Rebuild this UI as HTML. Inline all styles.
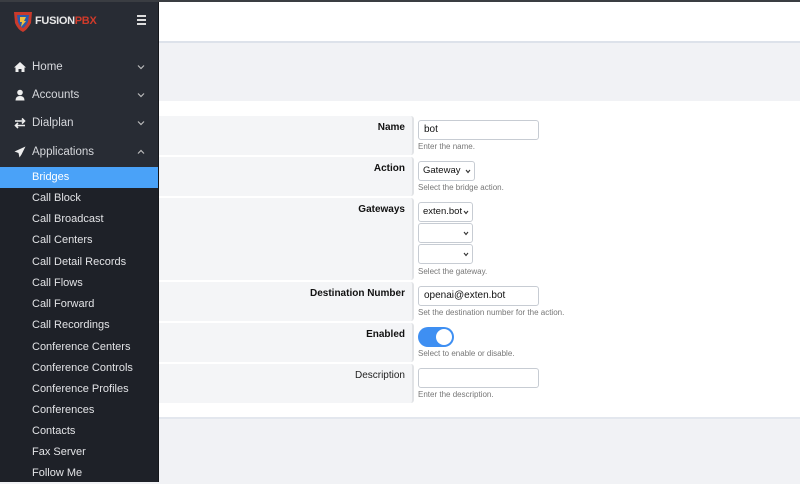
<!DOCTYPE html>
<html><head><style>
*{margin:0;padding:0;box-sizing:border-box}
body{width:800px;height:482px;overflow:hidden;background:#f1f2f5;font-family:"Liberation Sans",sans-serif;position:relative}
#topline{position:absolute;left:0;top:0;width:800px;height:2px;background:#3a3d42}
#side{position:absolute;left:0;top:0;width:159px;height:482px;background:#282c34;border-right:1px solid #15171b}
#sub{position:absolute;left:0;top:167px;width:158px;height:315px;background:#1e2128}
.mi{position:absolute;left:0;width:158px;height:28px;color:#d6d8dc;font-size:11.5px;line-height:28px}
.mi .t{position:absolute;left:32px}
.mi .ic{position:absolute;left:14px;top:8px;width:12px;height:12px}
.mi .ch{position:absolute;left:137px;top:11px;width:8px;height:6px}
.si{position:absolute;left:0;width:158px;height:21px;color:#e2e3e6;font-size:11px;line-height:21px;padding-left:32px}
.si.act{background:#4aa2f8;color:#fff}
#top{position:absolute;left:159px;top:2px;width:641px;height:41px;background:#fff;border-bottom:2px solid #dde2ea}
#card{position:absolute;left:159px;top:101px;width:641px;height:318px;background:#fff;border-bottom:2px solid #e3e7ee}
.row{position:absolute;left:0;width:641px}
.lab{position:absolute;left:0;top:0;width:255px;height:100%;background:#f4f5f7;border-right:2px solid #e1e3e6;border-radius:0 3px 3px 0;text-align:right;padding-right:7px;padding-top:6px;font-size:10px;font-weight:bold;color:#111}
.lab.n{font-weight:normal;color:#222}
.inp{position:absolute;height:20px;border:1px solid #c7ccd3;border-radius:3px;background:#fff;font-size:10px;line-height:18px;padding-left:5px;color:#111}
.sel{position:absolute;height:20px;border:1px solid #c7ccd3;border-radius:3px;background:#fff;font-size:9.5px;line-height:18px;padding-left:4px;color:#111}
.sel svg{position:absolute;right:3px;top:7px}
.help{position:absolute;font-size:8px;color:#777}
</style></head><body>
<div id="side">
 <svg style="position:absolute;left:12px;top:9px" width="22" height="24" viewBox="0 0 22 24"><path d="M2 3 L20 3 L19 14 Q15 21 11 23 Q6 21 3 14Z" fill="#c83a2c"/><path d="M5 6 L17 6 L16 13 Q13 18 11 19 Q8 18 6 13Z" fill="#2a5aa8"/><path d="M8 8 L14 8 L12 12 L14 12 L9 18 L10 13 L8 13Z" fill="#f0c040"/></svg>
 <div style="position:absolute;left:35px;top:15px;font-size:11px;font-weight:bold;color:#e8e8e8;letter-spacing:-0.3px">FUSION<span style="color:#d03a2a">PBX</span></div>
 <div style="position:absolute;left:137px;top:15px;width:9px"><div style="height:1.5px;background:#ddd;margin-bottom:2.5px"></div><div style="height:1.5px;background:#ddd;margin-bottom:2.5px"></div><div style="height:1.5px;background:#ddd"></div></div>
 <div class="mi" style="top:53px"><svg class="ic" viewBox="0 0 12 12"><path d="M6 1 L12 6.5 L10.5 6.5 L10.5 11 L7.5 11 L7.5 8 L4.5 8 L4.5 11 L1.5 11 L1.5 6.5 L0 6.5Z" fill="#eee"/></svg><span class="t">Home</span><svg class="ch" viewBox="0 0 8 6"><path d="M1 1.5 L4 4.5 L7 1.5" stroke="#bbb" stroke-width="1.2" fill="none"/></svg></div>
 <div class="mi" style="top:81px"><svg class="ic" viewBox="0 0 12 12"><circle cx="6" cy="3.5" r="2.8" fill="#eee"/><path d="M1.5 11.5 Q1.5 7 6 7 Q10.5 7 10.5 11.5Z" fill="#eee"/></svg><span class="t">Accounts</span><svg class="ch" viewBox="0 0 8 6"><path d="M1 1.5 L4 4.5 L7 1.5" stroke="#bbb" stroke-width="1.2" fill="none"/></svg></div>
 <div class="mi" style="top:109px"><svg class="ic" viewBox="0 0 12 12"><path d="M1 4 H10 M8 1.5 L10.5 4 L8 6.5 M11 8.5 H2 M4 6 L1.5 8.5 L4 11" stroke="#eee" stroke-width="1.6" fill="none"/></svg><span class="t">Dialplan</span><svg class="ch" viewBox="0 0 8 6"><path d="M1 1.5 L4 4.5 L7 1.5" stroke="#bbb" stroke-width="1.2" fill="none"/></svg></div>
 <div class="mi" style="top:138px"><svg class="ic" viewBox="0 0 12 12"><path d="M11.5 0.5 L0.5 5.5 L4.5 7 L5.5 11.5 L7.5 8.5Z" fill="#eee"/></svg><span class="t">Applications</span><svg class="ch" viewBox="0 0 8 6"><path d="M1 4.5 L4 1.5 L7 4.5" stroke="#bbb" stroke-width="1.2" fill="none"/></svg></div>
 <div id="sub">
  <div class="si act" style="top:0">Bridges</div>
  <div class="si" style="top:21px">Call Block</div>
  <div class="si" style="top:42px">Call Broadcast</div>
  <div class="si" style="top:63px">Call Centers</div>
  <div class="si" style="top:85px">Call Detail Records</div>
  <div class="si" style="top:106px">Call Flows</div>
  <div class="si" style="top:127px">Call Forward</div>
  <div class="si" style="top:148px">Call Recordings</div>
  <div class="si" style="top:170px">Conference Centers</div>
  <div class="si" style="top:191px">Conference Controls</div>
  <div class="si" style="top:212px">Conference Profiles</div>
  <div class="si" style="top:233px">Conferences</div>
  <div class="si" style="top:254px">Contacts</div>
  <div class="si" style="top:275px">Fax Server</div>
  <div class="si" style="top:296px">Follow Me</div>
 </div>
</div>
<div id="topline"></div>
<div id="top"></div>
<div id="card">
 <div class="row" style="top:15px;height:39px"><div class="lab">Name</div>
  <div class="inp" style="left:259px;top:4px;width:121px">bot</div>
  <div class="help" style="left:259px;top:26px">Enter the name.</div></div>
 <div class="row" style="top:56px;height:39px"><div class="lab">Action</div>
  <div class="sel" style="left:259px;top:4px;width:57px">Gateway<svg width="6" height="5" viewBox="0 0 6 5"><path d="M1 1 L3 3.5 L5 1" stroke="#333" stroke-width="1.1" fill="none"/></svg></div>
  <div class="help" style="left:259px;top:26px">Select the bridge action.</div></div>
 <div class="row" style="top:97px;height:82px"><div class="lab">Gateways</div>
  <div class="sel" style="left:259px;top:4px;width:55px">exten.bot<svg width="6" height="5" viewBox="0 0 6 5"><path d="M1 1 L3 3.5 L5 1" stroke="#333" stroke-width="1.1" fill="none"/></svg></div>
  <div class="sel" style="left:259px;top:25px;width:55px"><svg width="6" height="5" viewBox="0 0 6 5"><path d="M1 1 L3 3.5 L5 1" stroke="#333" stroke-width="1.1" fill="none"/></svg></div>
  <div class="sel" style="left:259px;top:46px;width:55px"><svg width="6" height="5" viewBox="0 0 6 5"><path d="M1 1 L3 3.5 L5 1" stroke="#333" stroke-width="1.1" fill="none"/></svg></div>
  <div class="help" style="left:259px;top:69px">Select the gateway.</div></div>
 <div class="row" style="top:181px;height:39px"><div class="lab">Destination Number</div>
  <div class="inp" style="left:259px;top:4px;width:121px">openai@exten.bot</div>
  <div class="help" style="left:259px;top:26px">Set the destination number for the action.</div></div>
 <div class="row" style="top:222px;height:39px"><div class="lab">Enabled</div>
  <div style="position:absolute;left:259px;top:4px;width:36px;height:20px;border-radius:10px;background:#3e8ff2"><div style="position:absolute;right:2px;top:2px;width:16px;height:16px;border-radius:50%;background:#fff"></div></div>
  <div class="help" style="left:259px;top:26px">Select to enable or disable.</div></div>
 <div class="row" style="top:263px;height:39px"><div class="lab n">Description</div>
  <div class="inp" style="left:259px;top:4px;width:121px"></div>
  <div class="help" style="left:259px;top:26px">Enter the description.</div></div>
</div>
</body></html>
